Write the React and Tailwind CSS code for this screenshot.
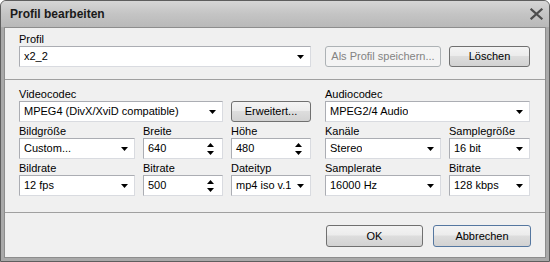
import React from "react";

function Arrow() {
  return (
    <svg width="7" height="4" viewBox="0 0 7 4" className="shrink-0">
      <path d="M0 0 H7 L3.5 4 Z" fill="#000" />
    </svg>
  );
}

function Spin() {
  return (
    <div className="flex flex-col items-center gap-[4px] shrink-0">
      <svg width="7" height="4" viewBox="0 0 7 4">
        <path d="M0 4 H7 L3.5 0 Z" fill="#000" />
      </svg>
      <svg width="7" height="4" viewBox="0 0 7 4">
        <path d="M0 0 H7 L3.5 4 Z" fill="#000" />
      </svg>
    </div>
  );
}

function Combo({ value, className = "" }) {
  return (
    <div
      className={`flex items-center justify-between h-[21px] bg-white border border-[#abadb3] border-b-[#d9dbe0] border-r-[#d9dbe0] pl-[4px] pr-[6px] text-[11px] text-black ${className}`}
    >
      <span className="whitespace-nowrap overflow-hidden">{value}</span>
      <Arrow />
    </div>
  );
}

function Spinner({ value, className = "" }) {
  return (
    <div
      className={`flex items-center justify-between h-[21px] bg-white border border-[#abadb3] border-b-[#d9dbe0] border-r-[#d9dbe0] pl-[4px] pr-[8px] text-[11px] text-black ${className}`}
    >
      <span className="whitespace-nowrap">{value}</span>
      <Spin />
    </div>
  );
}

function Button({ children, className = "", disabled = false, def = false }) {
  const base =
    "flex items-center justify-center rounded-[3px] border text-[11px] whitespace-nowrap";
  if (disabled) {
    return (
      <div
        className={`${base} border-[#adb2b5] bg-[#f4f4f4] text-[#838383] ${className}`}
      >
        {children}
      </div>
    );
  }
  return (
    <div
      className={`${base} ${
        def ? "border-[#5577a0]" : "border-[#707070]"
      } bg-[linear-gradient(#f4f4f4,#ececec_45%,#dddddd_50%,#d2d2d2)] text-black ${className}`}
    >
      {children}
    </div>
  );
}

function Field({ label, children, className = "" }) {
  return (
    <div className={`flex flex-col ${className}`}>
      <div className="h-[13px] leading-[13px] text-[11px] text-black whitespace-nowrap">
        {label}
      </div>
      {children}
    </div>
  );
}

export default function App() {
  return (
    <div className="w-[550px] h-[262px] bg-[#a9a9a9] border border-[#5e5e5e] rounded-t-[6px] flex flex-col font-['Liberation_Sans',Arial,sans-serif] overflow-hidden">
      {/* Title bar */}
      <div className="h-[26px] shrink-0 flex items-center justify-between pl-[9px] pr-[5px] bg-[linear-gradient(#d6d6d6,#c4c4c4_50%,#b9b9b9)] -mx-[0px]">
        <span className="text-[12px] font-bold text-[#1a1a1a] leading-none">
          Profil bearbeiten
        </span>
        <svg width="13" height="12" viewBox="0 0 13 12" className="mr-[1px]">
          <path
            d="M1.5 1.5 L11.5 10.5 M11.5 1.5 L1.5 10.5"
            stroke="#4d4d4d"
            strokeWidth="2.2"
            strokeLinecap="square"
          />
        </svg>
      </div>
      {/* Body */}
      <div className="mx-[3px] h-[231px] shrink-0 border border-[#8d8d8d] bg-[#f0f0f0] flex flex-col">
        {/* Section 1 */}
        <div className="pt-[5px] pl-[14px] pr-[14px] h-[51px] shrink-0">
          <div className="h-[13px] leading-[13px] text-[11px] text-black">Profil</div>
          <div className="flex items-center">
            <Combo value="x2_2" className="w-[292px]" />
            <Button disabled className="w-[116px] h-[21px] ml-[14px]">
              Als Profil speichern...
            </Button>
            <Button className="w-[81px] h-[21px] ml-[8px]">Löschen</Button>
          </div>
        </div>
        <div className="shrink-0 h-px bg-[#a0a0a0]" />
        {/* Section 2 */}
        <div className="pt-[8px] pl-[14px] pr-[14px] flex gap-[14px] h-[132px] shrink-0">
          {/* Left column */}
          <div className="w-[292px] flex flex-col gap-[3px]">
            <div className="flex flex-col">
              <div className="h-[13px] leading-[13px] text-[11px] text-black">
                Videocodec
              </div>
              <div className="flex">
                <Combo value="MPEG4 (DivX/XviD compatible)" className="w-[204px]" />
                <Button className="w-[80px] h-[21px] ml-[8px]">Erweitert...</Button>
              </div>
            </div>
            <div className="flex gap-[8px]">
              <Field label="Bildgröße" className="w-[116px]">
                <Combo value="Custom..." />
              </Field>
              <Field label="Breite" className="w-[80px]">
                <Spinner value="640" />
              </Field>
              <Field label="Höhe" className="w-[80px]">
                <Spinner value="480" />
              </Field>
            </div>
            <div className="flex gap-[8px]">
              <Field label="Bildrate" className="w-[116px]">
                <Combo value="12 fps" />
              </Field>
              <Field label="Bitrate" className="w-[80px]">
                <Spinner value="500" />
              </Field>
              <Field label="Dateityp" className="w-[80px]">
                <Combo value="mp4 iso v.1" />
              </Field>
            </div>
          </div>
          {/* Right column */}
          <div className="w-[205px] flex flex-col gap-[3px]">
            <Field label="Audiocodec">
              <Combo value="MPEG2/4 Audio" />
            </Field>
            <div className="flex gap-[8px]">
              <Field label="Kanäle" className="w-[116px]">
                <Combo value="Stereo" />
              </Field>
              <Field label="Samplegröße" className="w-[81px]">
                <Combo value="16 bit" />
              </Field>
            </div>
            <div className="flex gap-[8px]">
              <Field label="Samplerate" className="w-[116px]">
                <Combo value="16000 Hz" />
              </Field>
              <Field label="Bitrate" className="w-[81px]">
                <Combo value="128 kbps" />
              </Field>
            </div>
          </div>
        </div>
        <div className="shrink-0 h-px bg-[#a0a0a0]" />
        {/* Footer */}
        <div className="pt-[12px] pr-[14px] flex justify-end gap-[10px]">
          <Button className="w-[97px] h-[22px]">OK</Button>
          <Button def className="w-[98px] h-[22px]">
            Abbrechen
          </Button>
        </div>
      </div>
    </div>
  );
}
